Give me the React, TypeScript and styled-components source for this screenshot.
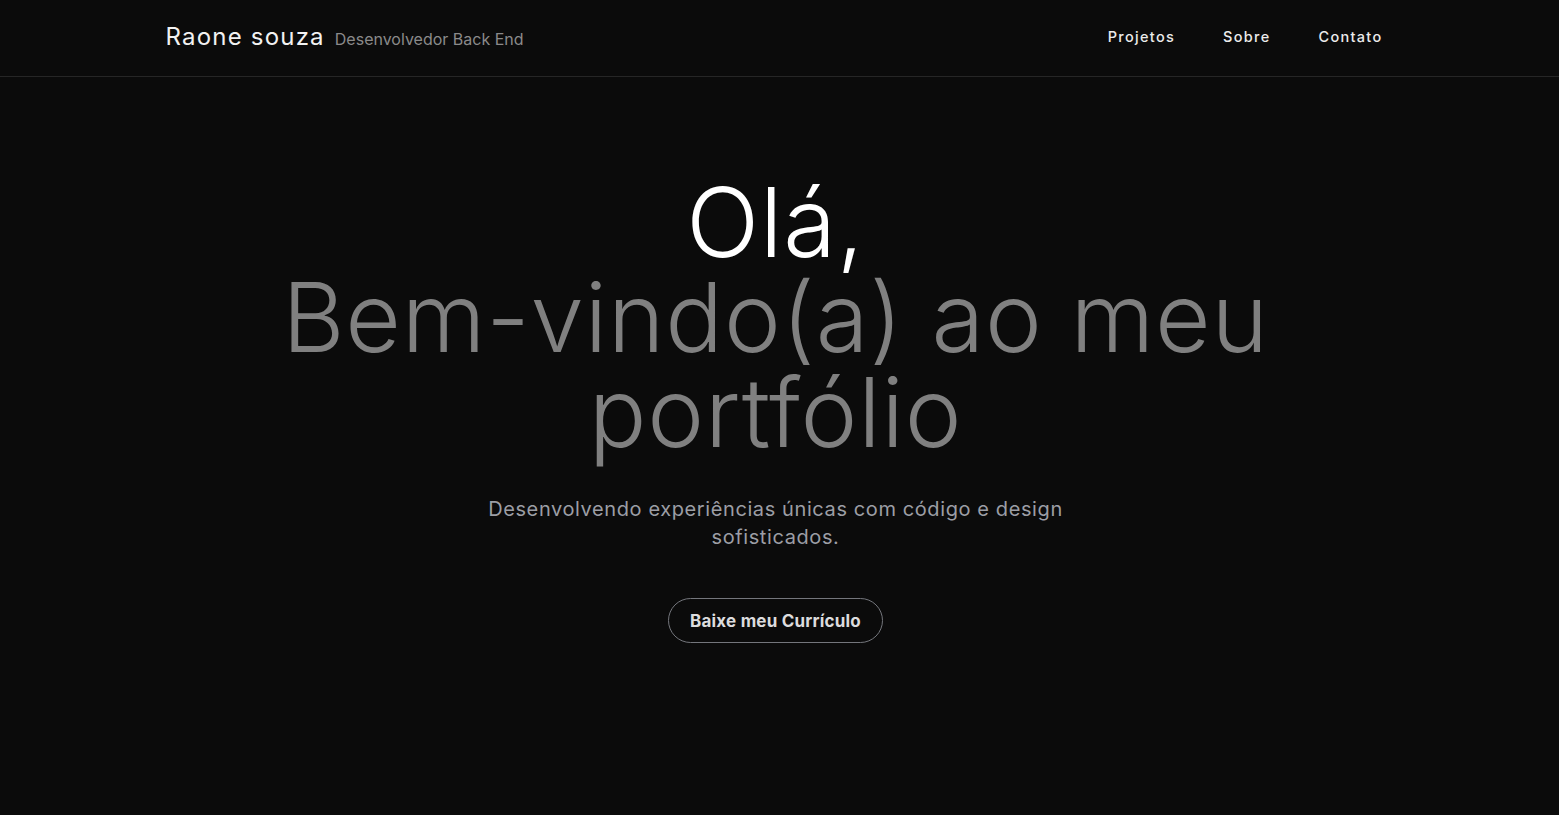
import React from "react";
import styled, { createGlobalStyle } from "styled-components";

const Global = createGlobalStyle`
  html, body { margin: 0; padding: 0; background: #0b0b0b; }
  body { font-family: Inter, "Noto Sans", sans-serif; color: #f2f2f2; -webkit-font-smoothing: antialiased; }
  ::-webkit-scrollbar { width: 4px; }
  ::-webkit-scrollbar-track { background: #0b0b0b; }
  ::-webkit-scrollbar-thumb { background: #353535; }
  * { box-sizing: border-box; }
`;

const Page = styled.div`
  min-height: 4075px;
  background: #0b0b0b;
`;

const Header = styled.header`
  height: 77px;
  border-bottom: 1px solid #262626;
`;

const HeaderInner = styled.div`
  max-width: 1280px;
  height: 100%;
  margin: 0 auto;
  padding: 0 37px 3px 26px;
  display: flex;
  align-items: center;
  justify-content: space-between;
`;

const Brand = styled.div`
  display: flex;
  align-items: baseline;
  gap: 10px;
`;

const Logo = styled.span`
  font-size: 24px;
  font-weight: 400;
  letter-spacing: 1.2px;
  color: #f2f2f2;
`;

const Role = styled.span`
  font-size: 16px;
  color: #8a8a8a;
`;

const Nav = styled.nav`
  display: flex;
  gap: 48px;
`;

const NavLink = styled.a`
  font-size: 14.5px;
  font-weight: 500;
  letter-spacing: 1.3px;
  color: #ececec;
  text-decoration: none;
`;

const Hero = styled.section`
  display: flex;
  flex-direction: column;
  align-items: center;
  padding: 98px 8px 0 0;
`;

const Title = styled.h1`
  margin: 0;
  max-width: 1024px;
  text-align: center;
  font-size: 96px;
  line-height: 95px;
  font-weight: 300;
  letter-spacing: 0.8px;
`;

const TitleLine = styled.span<{ $muted?: boolean }>`
  display: block;
  color: ${(p) => (p.$muted ? "#808080" : "#ffffff")};
`;

const Lead = styled.p`
  margin: 35px 0 0;
  max-width: 580px;
  text-align: center;
  font-size: 20px;
  line-height: 28px;
  letter-spacing: 0.6px;
  color: #9c9ea5;
`;

const Button = styled.a`
  margin-top: 47px;
  display: inline-flex;
  align-items: center;
  height: 45px;
  padding: 0 21px;
  border: 1px solid #74767c;
  border-radius: 999px;
  font-size: 17px;
  font-weight: 700;
  letter-spacing: 0.2px;
  color: #dcdcde;
  text-decoration: none;
`;

export default function App() {
  return (
    <Page>
      <Global />
      <Header>
        <HeaderInner>
          <Brand>
            <Logo>Raone souza</Logo>
            <Role>Desenvolvedor Back End</Role>
          </Brand>
          <Nav>
            <NavLink href="#projetos">Projetos</NavLink>
            <NavLink href="#sobre">Sobre</NavLink>
            <NavLink href="#contato">Contato</NavLink>
          </Nav>
        </HeaderInner>
      </Header>
      <Hero>
        <Title>
          <TitleLine>Olá,</TitleLine>
          <TitleLine $muted>Bem-vindo(a) ao meu portfólio</TitleLine>
        </Title>
        <Lead>Desenvolvendo experiências únicas com código e design sofisticados.</Lead>
        <Button href="#">Baixe meu Currículo</Button>
      </Hero>
    </Page>
  );
}
